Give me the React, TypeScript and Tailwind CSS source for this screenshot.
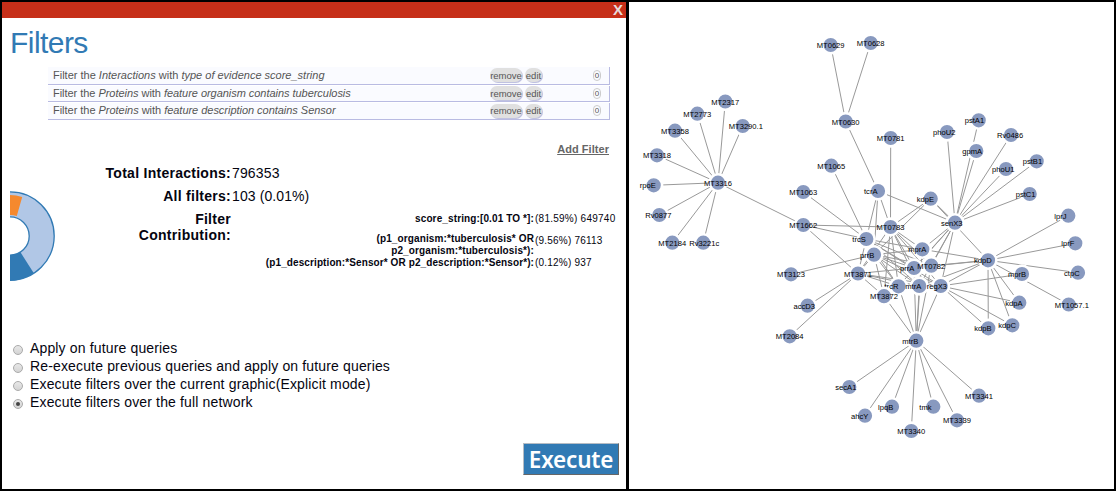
import React from "react";

type Node = { id: string; x: number; y: number };

const nodes: Node[] = [
  { id: "MT0629", x: 830.7, y: 45 }, { id: "MT0628", x: 870.7, y: 43 },
  { id: "MT0630", x: 845.7, y: 121.5 }, { id: "MT0781", x: 890.7, y: 138 },
  { id: "MT2317", x: 725.3, y: 101.5 }, { id: "MT2773", x: 697.3, y: 113.7 },
  { id: "MT3290.1", x: 742.7, y: 126 }, { id: "MT3358", x: 675, y: 130.7 },
  { id: "MT3318", x: 657, y: 155.3 }, { id: "rpoE", x: 653.7, y: 185.3 },
  { id: "MT3316", x: 718, y: 182.7 }, { id: "Rv0877", x: 659.3, y: 215 },
  { id: "MT2184", x: 672.3, y: 242.7 }, { id: "Rv3221c", x: 703.3, y: 242.7 },
  { id: "MT1063", x: 803.3, y: 192 }, { id: "MT1065", x: 831.3, y: 165.7 },
  { id: "MT1662", x: 803.3, y: 225 }, { id: "MT3123", x: 791, y: 274.3 },
  { id: "accD3", x: 807.5, y: 305.7 }, { id: "MT2084", x: 789.7, y: 336.3 },
  { id: "tcrA", x: 878, y: 191 }, { id: "kdpE", x: 930.7, y: 198.7 },
  { id: "trcS", x: 866.3, y: 239 }, { id: "MT0783", x: 890.5, y: 227 },
  { id: "senX3", x: 955, y: 222.7 }, { id: "mprA", x: 922.3, y: 249.3 },
  { id: "prrB", x: 874, y: 254.7 }, { id: "prrA", x: 914, y: 268 },
  { id: "MT0782", x: 931.3, y: 265.7 }, { id: "kdpD", x: 988, y: 260.3 },
  { id: "MT3871", x: 858, y: 273.5 }, { id: "trcR", x: 898.5, y: 286.3 },
  { id: "MT3872", x: 884, y: 296.2 }, { id: "mtrA", x: 919.3, y: 286 },
  { id: "regX3", x: 940.7, y: 286 }, { id: "phoU2", x: 947, y: 132 },
  { id: "pstA1", x: 978.7, y: 120.3 }, { id: "gpmA", x: 976.3, y: 151 },
  { id: "Rv0486", x: 1011, y: 135 }, { id: "phoU1", x: 1006, y: 169 },
  { id: "pstB1", x: 1036.7, y: 161.3 }, { id: "pstC1", x: 1029.7, y: 194 },
  { id: "lprJ", x: 1068.3, y: 215.7 }, { id: "lprF", x: 1075.3, y: 243.3 },
  { id: "ctpC", x: 1078, y: 272.7 }, { id: "mprB", x: 1022, y: 274 },
  { id: "MT1057.1", x: 1068.7, y: 304.5 }, { id: "kdpA", x: 1019.3, y: 302.7 },
  { id: "kdpC", x: 1012.3, y: 325.3 }, { id: "kdpB", x: 988.3, y: 328.3 },
  { id: "mtrB", x: 916.3, y: 340.7 }, { id: "secA1", x: 849.3, y: 387 },
  { id: "ahcY", x: 865, y: 415.7 }, { id: "lpqB", x: 892, y: 406.7 },
  { id: "tmk", x: 933.3, y: 406.7 }, { id: "MT3340", x: 911.3, y: 431 },
  { id: "MT3339", x: 957, y: 420.3 }, { id: "MT3341", x: 979, y: 395.7 },
];

const links: Record<string, string> = {
  MT0630: "MT0629 MT0628 tcrA",
  MT3316: "MT2317 MT2773 MT3290.1 MT3358 MT3318 rpoE Rv0877 MT2184 Rv3221c MT1662",
  MT1662: "MT0783 trcS MT3871",
  trcS: "MT1065 MT1063 tcrA mprA prrA MT0782 mtrA regX3 trcR MT3871",
  tcrA: "MT0783 senX3 prrB",
  kdpE: "MT0783 senX3 kdpD prrB",
  MT0783: "MT0781 mprA prrA MT0782 mtrA regX3 trcR MT3872 MT3871",
  prrB: "MT3123 mprA prrA MT0782 mtrA regX3 trcR MT3872 MT3871",
  MT3871: "accD3 MT2084 MT3872 trcR prrA mtrA regX3",
  senX3: "phoU2 pstA1 gpmA Rv0486 phoU1 pstB1 pstC1 mprA prrA MT0782 regX3 mtrA trcR",
  kdpD: "lprJ lprF ctpC MT1057.1 kdpA kdpB kdpC mprA prrA MT0782 regX3 mtrA",
  regX3: "mprB kdpA kdpB kdpC",
  mtrB: "MT3872 trcR mtrA prrA MT0782 mprA regX3 secA1 ahcY lpqB tmk MT3340 MT3339 MT3341",
};

const byId = new Map(nodes.map((n) => [n.id, n]));

function Network() {
  return (
    <svg viewBox="629 2 485 487" className="block h-[487px] w-[485px] bg-white">
      <g stroke="#999" strokeWidth="1">
        {Object.entries(links).flatMap(([from, list]) =>
          list.split(" ").map((to) => {
            const a = byId.get(from)!;
            const b = byId.get(to)!;
            return <line key={from + to} x1={a.x} y1={a.y} x2={b.x} y2={b.y} />;
          })
        )}
      </g>
      {nodes.map((n) => (
        <g key={n.id}>
          <circle cx={n.x} cy={n.y} r="8.4" fill="#8899bf" stroke="#fff" strokeWidth="2.6" />
          <text x={n.x - 14} y={n.y + 3} fontSize="7.6" fill="#000" className="font-['Liberation_Sans',sans-serif]">
            {n.id}
          </text>
        </g>
      ))}
    </svg>
  );
}

function Donut() {
  return (
    <svg viewBox="0 0 46 92" className="mt-[25px] h-[92px] w-[46px] shrink-0">
      <circle cx="0" cy="46" r="31.8" fill="none" stroke="#b1c7e6" strokeWidth="25" />
      <path d="M0 5 A41 41 0 0 1 12.2 6.9 L6.8 26 A21 21 0 0 0 0 25 Z" fill="#f5892e" />
      <path d="M0 91 V65 A19 19 0 0 0 10.5 62.3 L23.7 83 A44.5 44.5 0 0 1 0 91 Z" fill="#317ab4" />
      <circle cx="0" cy="46" r="44.2" fill="none" stroke="#317ab4" strokeWidth="1.3" />
      <circle cx="0" cy="46" r="19.2" fill="none" stroke="#317ab4" strokeWidth="1.3" />
    </svg>
  );
}

const filters = [
  { subject: "Interactions", rule: "type of evidence score_string", size: "h-[18px] pb-px" },
  { subject: "Proteins", rule: "feature organism contains tuberculosis", size: "h-[16px] pb-px tracking-[-0.04px]" },
  { subject: "Proteins", rule: "feature description contains Sensor", size: "h-[17px] pb-px tracking-[-0.03px]" },
];

function FilterRow({ subject, rule, size }: { subject: string; rule: string; size: string }) {
  return (
    <li className={`flex items-center border-r border-b border-[#b9bbe2] bg-[#fafbff] pl-[5px] text-[11px] leading-none text-[#555] ${size}`}>
      <span className="w-[437px] whitespace-nowrap">
        Filter the <i>{subject}</i> with <i>{rule}</i>
      </span>
      <button className="h-[14px] w-[32px] rounded-full bg-[#e0e0e0] text-[9.5px] leading-[13px] shadow-[1px_1px_0_#c0c2e0]">remove</button>
      <button className="ml-[3px] h-[14px] w-[17px] rounded-full bg-[#e0e0e0] text-[9.5px] leading-[13px] shadow-[1px_1px_0_#c0c2e0]">edit</button>
      <span className="ml-[51px] h-[11px] w-[8px] rounded-full border border-[#ccc] text-center text-[8px] leading-[9px]">0</span>
    </li>
  );
}

const modes = [
  "Apply on future queries",
  "Re-execute previous queries and apply on future queries",
  "Execute filters over the current graphic(Explicit mode)",
  "Execute filters over the full network",
];

function Stats() {
  return (
    <div className="flex flex-1 flex-col text-[14px] leading-[16px] text-[#050510]">
      <div className="flex h-[23px] items-start">
        <b className="w-[175px] text-right tracking-[0.27px]">Total Interactions:</b>
        <span className="ml-[1px] tracking-[0.15px]">796353</span>
      </div>
      <div className="flex h-[23px] items-start">
        <b className="w-[175px] text-right tracking-[0.27px]">All filters:</b>
        <span className="ml-[1px] tracking-[0.1px]">103 (0.01%)</span>
      </div>
      <div className="flex items-start">
        <b className="w-[175px] text-right tracking-[0.27px]">
          Filter
          <br />
          Contribution:
        </b>
        <dl className="grid grid-cols-[303px_auto] gap-x-px pt-[2px] text-[10px] leading-[12px] whitespace-nowrap">
          <dt className="h-[20px] text-right font-bold tracking-[0.12px]">score_string:[0.01 TO *]:</dt>
          <dd className="tracking-[0.25px]">(81.59%) 649740</dd>
          <dt className="h-[24px] text-right font-bold tracking-[0.12px]">
            (p1_organism:*tuberculosis* OR
            <br />
            p2_organism:*tuberculosis*):
          </dt>
          <dd className="pt-[2px] tracking-[0.2px]">(9.56%) 76113</dd>
          <dt className="text-right font-bold tracking-[0.1px]">(p1_description:*Sensor* OR p2_description:*Sensor*):</dt>
          <dd className="tracking-[0.2px]">(0.12%) 937</dd>
        </dl>
      </div>
    </div>
  );
}

export default function App() {
  return (
    <main className="flex h-[491px] w-[1116px] gap-[3px] bg-black p-[2px] font-['Liberation_Sans',Arial,sans-serif]">
      <section className="flex w-[624px] shrink-0 flex-col overflow-hidden bg-white">
        <header className="flex h-[16px] shrink-0 justify-end bg-[#c62f19] pr-[3px]">
          <button className="text-[15px] leading-[16px] font-bold text-[#e8dcdc]">X</button>
        </header>
        <h1 className="mt-[8px] ml-[8px] h-[34px] text-[30px] leading-[34px] tracking-[-0.55px] text-[#317ab4]">Filters</h1>
        <ul className="mt-[7px] ml-[46px] flex w-[562px] flex-col gap-[1px]">
          {filters.map((f) => (
            <FilterRow key={f.rule} {...f} />
          ))}
        </ul>
        <a className="mt-[21px] mr-[17px] h-[16px] self-end text-[11px] leading-[16px] font-bold tracking-[0.05px] text-[#666] underline">Add Filter</a>
        <div className="mt-[8px] flex h-[174px] shrink-0 pl-[8px]">
          <Donut />
          <Stats />
        </div>
        <form className="flex flex-col pl-[11px] text-[14px] text-[#050510]">
          {modes.map((label, i) => (
            <label key={label} className="flex h-[18px] items-center gap-[7px] whitespace-nowrap">
              <span className="mt-[3px] flex size-[10px] items-center justify-center rounded-full border border-[#aaa] bg-linear-to-b from-[#e8e8e8] to-[#d4d4d4]">
                {i === 3 && <span className="size-[4px] rounded-full bg-[#444]" />}
              </span>
              <span className="tracking-[0.15px]">{label}</span>
            </label>
          ))}
        </form>
        <button className="mt-[32px] mr-[7px] h-[32px] w-[96px] self-end border border-t-[#b5bcc4] border-r-[#666] border-b-[#666] border-l-[#b5bcc4] bg-[#317ab4] font-['Noto_Sans','Open_Sans',sans-serif] text-[22.5px] leading-[27px] font-semibold tracking-[-0.2px] text-white">
          Execute
        </button>
      </section>
      <section className="w-[485px] shrink-0 bg-white">
        <Network />
      </section>
    </main>
  );
}
